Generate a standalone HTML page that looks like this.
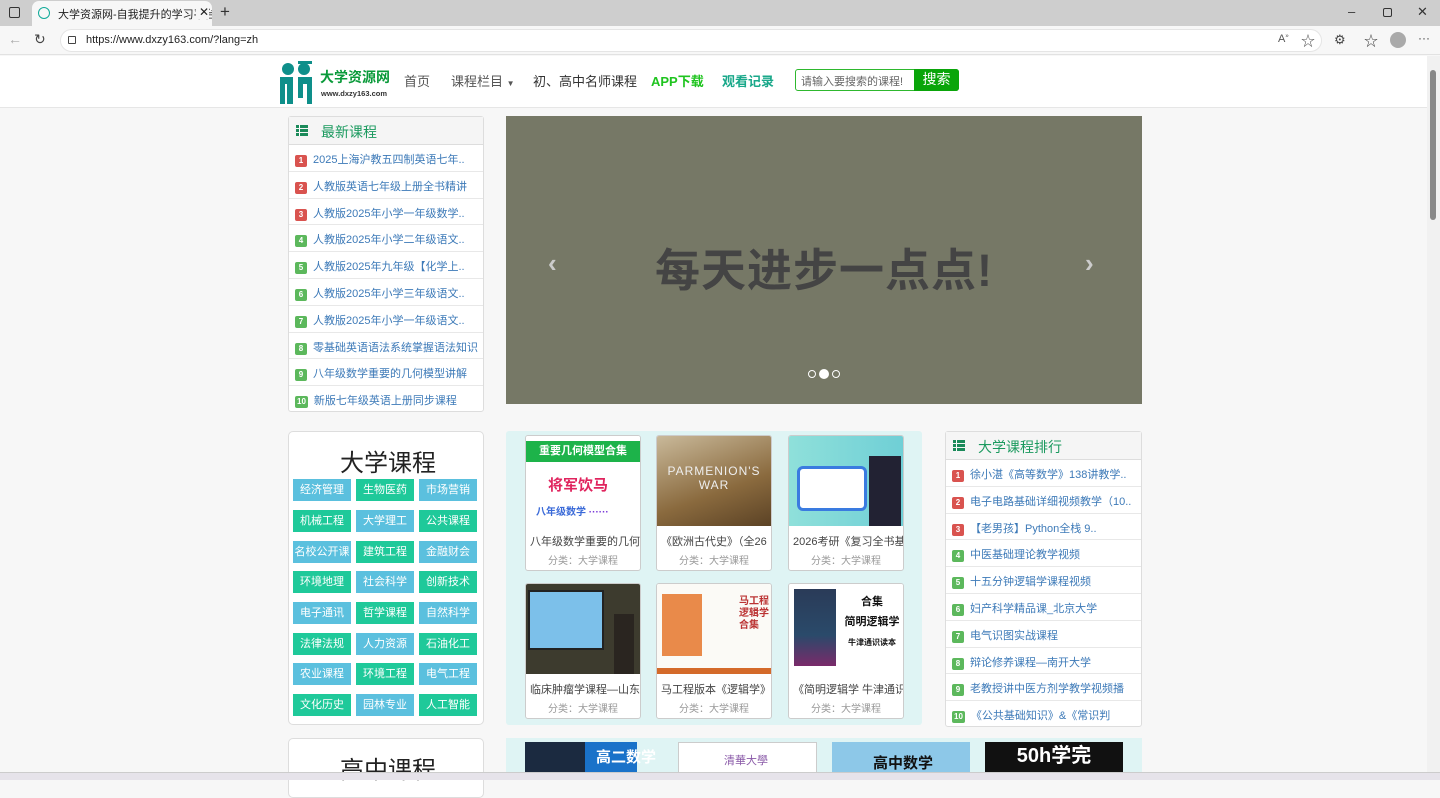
<!DOCTYPE html>
<html><head><meta charset="utf-8">
<style>
*{margin:0;padding:0;box-sizing:border-box}
body{width:1440px;height:780px;overflow:hidden;background:#f7f7f7;font-family:"Liberation Sans","Noto Sans CJK SC",sans-serif;position:relative;font-size:12px}
.a{position:absolute}
.tabbar{left:0;top:0;width:1440px;height:26px;background:#cecece}
.tab{left:32px;top:1px;width:180px;height:26px;background:#f7f7f7;border-radius:7px 7px 0 0;font-size:11px;color:#222;padding:5px 0 0 26px;white-space:nowrap;overflow:hidden}
.addr{left:0;top:26px;width:1440px;height:29px;background:#f7f7f7;border-bottom:1px solid #e2e2e2}
.url{left:60px;top:29px;width:1262px;height:23px;background:#fff;border-radius:12px;border:1px solid #e5e5e5;font-size:11px;color:#222;padding:4px 0 0 25px}
.header{left:0;top:56px;width:1427px;height:52px;background:#fff;border-bottom:1px solid #e6e6e6}
.nav{top:71px;font-size:13px;color:#555}
.card{background:#fff;border:1px solid #ddd;border-radius:3px}
.lh{height:28px;background:#f5f5f5;border-bottom:1px solid #ddd;color:#1b9a5f;font-size:14px;padding:5px 0 0 32px;position:relative}
.ico{position:absolute;left:7px;top:8px;width:12px;height:11px}
.ico i{display:block;height:3px;margin-bottom:1px;background:linear-gradient(90deg,#1b8a5a 3px,#fff 3px,#fff 4px,#1b8a5a 4px)}
.row{height:26.8px;border-bottom:1px solid #e8e8e8;color:#3d7ab8;font-size:11px;padding:6px 0 0 6px;white-space:nowrap;overflow:hidden}
.row:last-child{border-bottom:none}
.n{display:inline-block;min-width:12px;height:12px;border-radius:2px;color:#fff;font-size:8px;text-align:center;line-height:12px;margin-right:6px;font-weight:bold;padding:0 2px}
.r{background:#d9534f}.g{background:#5cb85c}
.tag{position:absolute;width:58px;height:22px;color:#fff;font-size:11px;text-align:center;line-height:22px}
.b{background:#5bc0de}.gr{background:#1fc99a}
.cc{position:absolute;width:116px;height:136px;background:#fff;border:1px solid #ccc;border-radius:3px;overflow:hidden}
.cc .im{height:90px;position:relative;overflow:hidden}
.cc .t{font-size:11px;color:#444;padding:7px 0 0 4px;white-space:nowrap;overflow:hidden}
.cc .c{font-size:10px;color:#999;text-align:center;margin-top:3px}
</style></head><body>
<div class="a tabbar"></div>
<div class="a" style="left:9px;top:7px;width:11px;height:11px;border:1.5px solid #333;border-radius:2px"></div>
<div class="a tab"><span class="a" style="left:6px;top:6px;width:12px;height:12px;border-radius:50%;border:1.5px solid #1a9;"></span>大学资源网-自我提升的学习平台<span class="a" style="left:164px;top:4px;font-size:12px;background:#f7f7f7;padding-left:3px">✕</span></div>
<div class="a" style="left:220px;top:2px;font-size:17px;color:#333">+</div>
<div class="a" style="left:1348px;top:4px;font-size:13px;color:#333">–</div>
<div class="a" style="left:1383px;top:8px;width:9px;height:9px;border:1.3px solid #333;border-radius:2px"></div>
<div class="a" style="left:1417px;top:4px;font-size:13px;color:#333">✕</div>
<div class="a addr"></div>
<div class="a" style="left:8px;top:31px;font-size:14px;color:#aaa">←</div>
<div class="a" style="left:34px;top:31px;font-size:14px;color:#444">↻</div>
<div class="a url"><span class="a" style="left:7px;top:6px;width:8px;height:8px;border:1.3px solid #444;border-radius:1px"></span>https://www.dxzy163.com/?lang=zh</div>
<div class="a" style="left:1278px;top:33px;font-size:11px;color:#555">A<sup style="font-size:6px">»</sup></div>
<div class="a" style="left:1301px;top:31px;font-size:14px;color:#555">☆</div>
<div class="a" style="left:1334px;top:32px;font-size:13px;color:#444">⚙</div>
<div class="a" style="left:1364px;top:31px;font-size:14px;color:#444">☆</div>
<div class="a" style="left:1390px;top:32px;width:16px;height:16px;border-radius:50%;background:#aaa"></div>
<div class="a" style="left:1418px;top:31px;font-size:12px;color:#444">···</div>
<div class="a header"></div>
<div class="a" style="left:1427px;top:56px;width:13px;height:716px;background:#f1f1f1"></div>
<div class="a" style="left:1430px;top:70px;width:6px;height:150px;background:#888;border-radius:3px"></div>
<svg class="a" style="left:278px;top:60px" width="40" height="44" viewBox="0 0 40 44"><circle cx="10" cy="9" r="6" fill="#0e8f8a"/><circle cx="26" cy="9" r="6" fill="#0e8f8a"/><rect x="20" y="1" width="14" height="3" fill="#0e8f8a"/><path d="M2 17h13v27H9V24H7v20H2zM20 17h14v27h-5V24h-4v14h-5z" fill="#0e8f8a"/></svg>
<div class="a" style="left:320px;top:67px;font-size:14px;font-weight:bold;color:#0a9a3a">大学资源网</div>
<div class="a" style="left:321px;top:89px;font-size:7.5px;font-weight:bold;color:#333">www.dxzy163.com</div>
<div class="a nav" style="left:404px">首页</div>
<div class="a nav" style="left:451px">课程栏目 <span style="font-size:8px">▼</span></div>
<div class="a nav" style="left:533px;color:#333">初、高中名师课程</div>
<div class="a nav" style="left:651px;color:#1fc41f;font-weight:bold">APP下载</div>
<div class="a nav" style="left:722px;color:#1aa88a;font-weight:bold">观看记录</div>
<div class="a" style="left:795px;top:69px;width:164px;height:22px;border:1px solid #2eb82e;border-radius:3px;background:#fff;font-size:11px;color:#666;padding:3px 0 0 5px">请输入要搜索的课程!</div>
<div class="a" style="left:914px;top:69px;width:45px;height:22px;background:#0aa50a;color:#fff;font-size:14px;text-align:center;line-height:21px;border-radius:0 3px 3px 0">搜索</div>

<div class="a card" style="left:288px;top:116px;width:196px;height:296px">
<div class="lh"><div class="ico"><i></i><i></i><i></i></div>最新课程</div>
<div class="row"><span class="n r">1</span>2025上海沪教五四制英语七年..</div>
<div class="row"><span class="n r">2</span>人教版英语七年级上册全书精讲</div>
<div class="row"><span class="n r">3</span>人教版2025年小学一年级数学..</div>
<div class="row"><span class="n g">4</span>人教版2025年小学二年级语文..</div>
<div class="row"><span class="n g">5</span>人教版2025年九年级【化学上..</div>
<div class="row"><span class="n g">6</span>人教版2025年小学三年级语文..</div>
<div class="row"><span class="n g">7</span>人教版2025年小学一年级语文..</div>
<div class="row"><span class="n g">8</span>零基础英语语法系统掌握语法知识</div>
<div class="row"><span class="n g">9</span>八年级数学重要的几何模型讲解</div>
<div class="row"><span class="n g">10</span>新版七年级英语上册同步课程</div>
</div>
<div class="a" style="left:506px;top:116px;width:636px;height:288px;background:#767866"></div>
<div class="a" style="left:655px;top:234px;font-size:45px;font-weight:bold;color:#444;letter-spacing:1px">每天进步一点点!</div>
<div class="a" style="left:548px;top:248px;font-size:26px;color:#ccc;font-weight:bold">‹</div>
<div class="a" style="left:1085px;top:248px;font-size:26px;color:#ccc;font-weight:bold">›</div>
<div class="a" style="left:808px;top:370px;width:8px;height:8px;border:1px solid #fff;border-radius:50%"></div>
<div class="a" style="left:819px;top:369px;width:10px;height:10px;background:#fff;border-radius:50%"></div>
<div class="a" style="left:832px;top:370px;width:8px;height:8px;border:1px solid #fff;border-radius:50%"></div>

<div class="a card" style="left:288px;top:431px;width:196px;height:294px;border-radius:5px"></div>
<div class="a" style="left:340px;top:443px;font-size:24px;color:#222">大学课程</div>
<div class="a" style="left:288px;top:738px;width:196px;height:60px;background:#fff;border:1px solid #ddd;border-radius:5px"></div>
<div class="a" style="left:340px;top:750px;font-size:24px;color:#222">高中课程</div>
<div class="tag b" style="left:293px;top:479px">经济管理</div><div class="tag gr" style="left:356px;top:479px">生物医药</div><div class="tag b" style="left:419px;top:479px">市场营销</div>
<div class="tag gr" style="left:293px;top:510px">机械工程</div><div class="tag b" style="left:356px;top:510px">大学理工</div><div class="tag gr" style="left:419px;top:510px">公共课程</div>
<div class="tag b" style="left:293px;top:541px">名校公开课</div><div class="tag gr" style="left:356px;top:541px">建筑工程</div><div class="tag b" style="left:419px;top:541px">金融财会</div>
<div class="tag gr" style="left:293px;top:571px">环境地理</div><div class="tag b" style="left:356px;top:571px">社会科学</div><div class="tag gr" style="left:419px;top:571px">创新技术</div>
<div class="tag b" style="left:293px;top:602px">电子通讯</div><div class="tag gr" style="left:356px;top:602px">哲学课程</div><div class="tag b" style="left:419px;top:602px">自然科学</div>
<div class="tag gr" style="left:293px;top:633px">法律法规</div><div class="tag b" style="left:356px;top:633px">人力资源</div><div class="tag gr" style="left:419px;top:633px">石油化工</div>
<div class="tag b" style="left:293px;top:663px">农业课程</div><div class="tag gr" style="left:356px;top:663px">环境工程</div><div class="tag b" style="left:419px;top:663px">电气工程</div>
<div class="tag gr" style="left:293px;top:694px">文化历史</div><div class="tag b" style="left:356px;top:694px">园林专业</div><div class="tag gr" style="left:419px;top:694px">人工智能</div>

<div class="a" style="left:506px;top:431px;width:416px;height:294px;background:#dff4f4;border-radius:3px"></div>
<div class="cc" style="left:525px;top:435px"><div class="im" style="background:#fff;padding-top:5px"><div style="background:#1db34a;color:#fff;font-size:11px;text-align:center;height:21px;line-height:21px;font-weight:bold">重要几何模型合集</div><div style="color:#e0245e;font-size:15px;font-weight:bold;padding:12px 0 0 22px">将军饮马</div><div style="color:#3a6ad8;font-size:10px;padding:8px 0 0 10px;font-weight:bold">八年级数学 <span style="color:#7a3ad8">······</span></div></div><div class="t">八年级数学重要的几何</div><div class="c">分类：大学课程</div></div>
<div class="cc" style="left:656px;top:435px"><div class="im" style="background:linear-gradient(160deg,#c9b99a,#8a6a3e 60%,#5b4225)"><div style="color:#eee;font-size:12px;text-align:center;padding-top:28px;letter-spacing:1px">PARMENION'S<br>WAR</div></div><div class="t">《欧洲古代史》（全26</div><div class="c">分类：大学课程</div></div>
<div class="cc" style="left:788px;top:435px"><div class="im" style="background:linear-gradient(90deg,#8fe0da,#6fcfd6)"><div style="position:absolute;left:8px;top:30px;width:70px;height:45px;background:#fff;border:3px solid #3a7be0;border-radius:6px"></div><div style="position:absolute;left:80px;top:20px;width:32px;height:70px;background:#223"></div></div><div class="t">2026考研《复习全书基</div><div class="c">分类：大学课程</div></div>
<div class="cc" style="left:525px;top:583px"><div class="im" style="background:#3d3b2e"><div style="position:absolute;left:2px;top:6px;width:76px;height:60px;background:#7cc0ea;border:2px solid #222"></div><div style="position:absolute;left:88px;top:30px;width:20px;height:60px;background:#2a2520"></div></div><div class="t">临床肿瘤学课程—山东</div><div class="c">分类：大学课程</div></div>
<div class="cc" style="left:656px;top:583px"><div class="im" style="background:#fbfaf6;border-bottom:6px solid #d46a2a"><div style="position:absolute;left:5px;top:10px;width:40px;height:62px;background:#e98a4a"></div><div style="position:absolute;left:82px;top:12px;font-size:10px;font-weight:bold;color:#b33;line-height:12px">马工程<br>逻辑学<br>合集</div></div><div class="t">马工程版本《逻辑学》</div><div class="c">分类：大学课程</div></div>
<div class="cc" style="left:788px;top:583px"><div class="im" style="background:#fff"><div style="position:absolute;left:5px;top:5px;width:42px;height:77px;background:linear-gradient(#2a3b58,#2a4a6a 60%,#7a2a6a)"></div><div style="position:absolute;left:52px;top:8px;font-size:11px;font-weight:bold;color:#111;text-align:center;width:62px;line-height:20px">合集<br>简明逻辑学<br><span style="font-size:8px">牛津通识读本</span></div></div><div class="t">《简明逻辑学 牛津通识</div><div class="c">分类：大学课程</div></div>

<div class="a" style="left:506px;top:738px;width:636px;height:40px;background:#dff4f4"></div>
<div class="a" style="left:525px;top:742px;width:112px;height:36px;background:#1a72c9"></div>
<div class="a" style="left:525px;top:742px;width:60px;height:36px;background:#1b2a40"></div>
<div class="a" style="left:596px;top:746px;color:#fff;font-size:15px;font-weight:bold">高二数学</div>
<div class="a" style="left:678px;top:742px;width:139px;height:36px;background:#fff;border:1px solid #ccc;color:#8a5aa8;font-size:11px;padding:9px 0 0 45px">清華大學</div>
<div class="a" style="left:832px;top:742px;width:138px;height:36px;background:#8dc8e8"></div>
<div class="a" style="left:873px;top:752px;font-size:15px;font-weight:bold;color:#111">高中数学</div>
<div class="a" style="left:985px;top:742px;width:138px;height:36px;background:#111;color:#fff;font-size:20px;font-weight:bold;text-align:center;line-height:28px">50h学完</div>

<div class="a card" style="left:945px;top:431px;width:197px;height:296px">
<div class="lh"><div class="ico"><i></i><i></i><i></i></div>大学课程排行</div>
<div class="row"><span class="n r">1</span>徐小湛《高等数学》138讲教学..</div>
<div class="row"><span class="n r">2</span>电子电路基础详细视频教学（10..</div>
<div class="row"><span class="n r">3</span>【老男孩】Python全栈 9..</div>
<div class="row"><span class="n g">4</span>中医基础理论教学视频</div>
<div class="row"><span class="n g">5</span>十五分钟逻辑学课程视频</div>
<div class="row"><span class="n g">6</span>妇产科学精品课_北京大学</div>
<div class="row"><span class="n g">7</span>电气识图实战课程</div>
<div class="row"><span class="n g">8</span>辩论修养课程—南开大学</div>
<div class="row"><span class="n g">9</span>老教授讲中医方剂学教学视频播</div>
<div class="row"><span class="n g">10</span>《公共基础知识》&amp;《常识判</div>
</div>
<div class="a" style="left:0;top:772px;width:1440px;height:8px;background:#e6e3ea;border-top:1px solid #ccc"></div>
</body></html>
